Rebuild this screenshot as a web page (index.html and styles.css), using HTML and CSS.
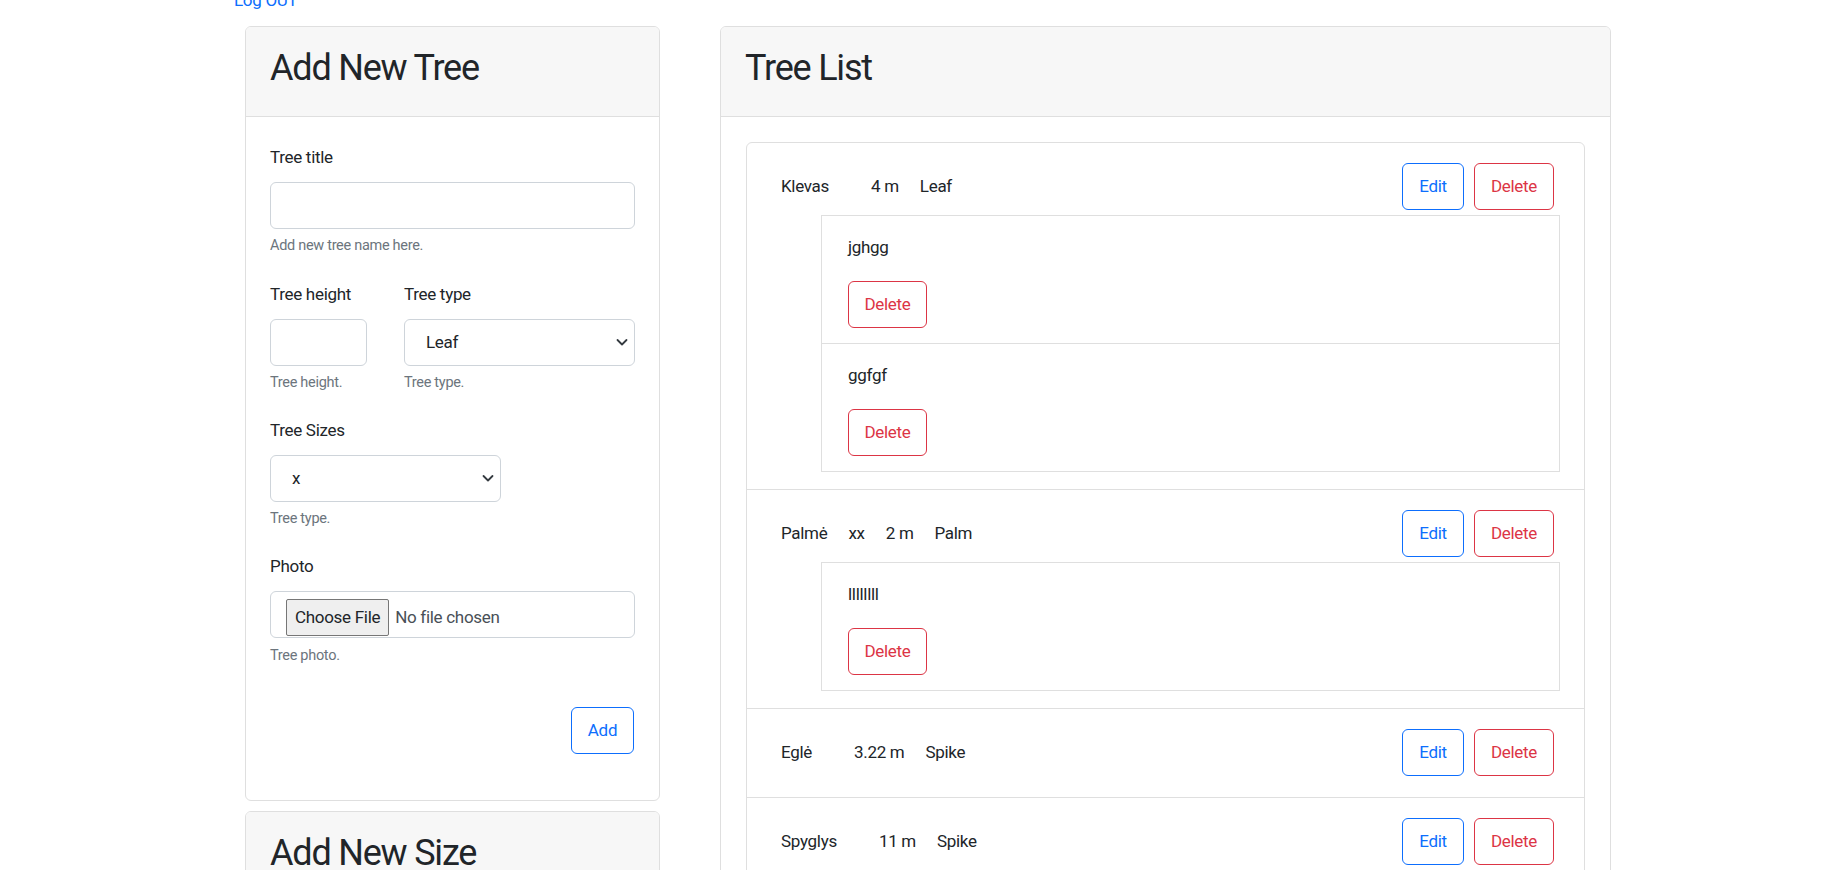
FILE: index.html
```html
<!DOCTYPE html>
<html lang="en">
<head>
<meta charset="utf-8">
<title>Trees</title>
<link rel="stylesheet" href="styles.css">
</head>
<body>
<div class="topbar"><a class="logout" href="#">Log OUT</a></div>
<div class="layout">
  <div class="col-left">
    <div class="card">
      <div class="card-header"><h2 class="card-title">Add New Tree</h2></div>
      <div class="card-body">
        <div class="group group-first">
          <label class="label">Tree title</label>
          <input class="control" type="text">
          <div class="help">Add new tree name here.</div>
        </div>
        <div class="group grid2">
          <div>
            <label class="label">Tree height</label>
            <input class="control" type="text">
            <div class="help">Tree height.</div>
          </div>
          <div>
            <label class="label">Tree type</label>
            <div class="select-wrap">
              <select class="control select"><option>Leaf</option></select>
              <svg class="chev" viewBox="0 0 12 12" width="12" height="12"><path d="M1.5 4l4.5 4.5 4.5-4.5" fill="none" stroke="#343a40" stroke-width="1.8" stroke-linecap="round" stroke-linejoin="round"/></svg>
            </div>
            <div class="help">Tree type.</div>
          </div>
        </div>
        <div class="group grid2">
          <div class="span-first">
            <label class="label">Tree Sizes</label>
            <div class="select-wrap">
              <select class="control select"><option>x</option></select>
              <svg class="chev" viewBox="0 0 12 12" width="12" height="12"><path d="M1.5 4l4.5 4.5 4.5-4.5" fill="none" stroke="#343a40" stroke-width="1.8" stroke-linecap="round" stroke-linejoin="round"/></svg>
            </div>
            <div class="help">Tree type.</div>
          </div>
        </div>
        <div class="group">
          <label class="label">Photo</label>
          <input class="control file" type="file">
          <div class="help help-photo">Tree photo.</div>
        </div>
        <div class="actions">
          <button class="btn btn-blue btn-add">Add</button>
        </div>
      </div>
    </div>
    <div class="card card-second">
      <div class="card-header"><h2 class="card-title">Add New Size</h2></div>
      <div class="card-body">
        <div class="group">
          <label class="label">Size title</label>
          <input class="control" type="text">
        </div>
      </div>
    </div>
  </div>
  <div class="col-right">
    <div class="card">
      <div class="card-header"><h2 class="card-title">Tree List</h2></div>
      <div class="card-body card-body-list">
        <ul class="list">
          <li class="item">
            <div class="row">
              <div class="info"><span>Klevas</span><span></span><span>4 m</span><span>Leaf</span></div>
              <div class="btns"><button class="btn btn-blue btn-edit">Edit</button><button class="btn btn-red btn-del">Delete</button></div>
            </div>
            <ul class="sublist">
              <li class="subitem"><div class="subtext">jghgg</div><button class="btn btn-red btn-del">Delete</button></li>
              <li class="subitem"><div class="subtext">ggfgf</div><button class="btn btn-red btn-del">Delete</button></li>
            </ul>
          </li>
          <li class="item">
            <div class="row">
              <div class="info"><span>Palmė</span><span>xx</span><span>2 m</span><span>Palm</span></div>
              <div class="btns"><button class="btn btn-blue btn-edit">Edit</button><button class="btn btn-red btn-del">Delete</button></div>
            </div>
            <ul class="sublist">
              <li class="subitem"><div class="subtext">llllllll</div><button class="btn btn-red btn-del">Delete</button></li>
            </ul>
          </li>
          <li class="item">
            <div class="row">
              <div class="info"><span>Eglė</span><span></span><span>3.22 m</span><span>Spike</span></div>
              <div class="btns"><button class="btn btn-blue btn-edit">Edit</button><button class="btn btn-red btn-del">Delete</button></div>
            </div>
          </li>
          <li class="item">
            <div class="row">
              <div class="info"><span>Spyglys</span><span></span><span>11 m</span><span>Spike</span></div>
              <div class="btns"><button class="btn btn-blue btn-edit">Edit</button><button class="btn btn-red btn-del">Delete</button></div>
            </div>
          </li>
        </ul>
      </div>
    </div>
  </div>
</div>
</body>
</html>
```

FILE: styles.css
```css
html { overflow: hidden; }
body {
  margin: 0;
  font-family: "Roboto", "Liberation Sans", sans-serif;
  font-size: 17px;
  line-height: 27px;
  letter-spacing: -0.3px;
  color: #212529;
  background: #fff;
}
.topbar {
  padding-left: 234px;
  margin-top: -13px;
  height: 27px;
}
.logout {
  color: #0d6efd;
  text-decoration: none;
}
.layout {
  display: flex;
  gap: 60px;
  padding-left: 245px;
  margin-top: 12px;
  align-items: flex-start;
}
.col-left { width: 415px; flex: none; }
.col-right { width: 891px; flex: none; }
.card {
  border: 1px solid #dfdfdf;
  border-radius: 6px;
  background: #fff;
}
.card-second { margin-top: 10px; }
.card-header {
  background: #f7f7f7;
  border-bottom: 1px solid #dfdfdf;
  border-radius: 5px 5px 0 0;
  padding: 17px 24px 24px;
}
.card-title {
  margin: 0;
  font-size: 36px;
  line-height: 48px;
  font-weight: 400;
  letter-spacing: -1.2px;
}
.card-body {
  padding: 26px 24px 24px;
}
.card-body-list {
  padding: 25px 25px 24px;
}
.group { margin-bottom: 23px; }
.group-first { margin-bottom: 24px; }
.label {
  display: block;
  padding-top: 1px;
  margin-bottom: 11px;
}
.control {
  display: block;
  box-sizing: border-box;
  width: 100%;
  height: 47px;
  border: 1px solid #ced4da;
  border-radius: 6px;
  font: inherit;
  letter-spacing: inherit;
  color: #212529;
  background: #fff;
  margin: 0;
}
.help {
  margin-top: 6px;
  font-size: 14.5px;
  line-height: 21px;
  color: #6c757d;
}
.help-photo { margin-top: 7px; }
.grid2 {
  display: grid;
  grid-template-columns: 97px 1fr;
  column-gap: 37px;
}
.span-first { grid-column: 1 / span 2; width: 231px; }
.select-wrap { position: relative; }
.select {
  appearance: none;
  -webkit-appearance: none;
  padding: 0 32px 0 21px;
}
.chev {
  position: absolute;
  right: 7px;
  top: 17px;
  width: 12px;
  height: 12px;
  pointer-events: none;
}
.file {
  padding: 7px 15px;
  color: #495057;
}
.file::file-selector-button {
  font: inherit;
  letter-spacing: inherit;
  color: #212529;
  height: 37px;
  padding: 0 8px;
  margin-right: 6px;
  border: 1px solid #767676;
  border-radius: 2px;
  background: #efefef;
}
.actions {
  display: flex;
  justify-content: flex-end;
  padding-top: 18px;
  padding-bottom: 22px;
}
.btn {
  box-sizing: border-box;
  height: 47px;
  padding: 0;
  font: inherit;
  letter-spacing: inherit;
  background: #fff;
  border-radius: 6px;
  cursor: pointer;
}
.btn-blue { color: #0d6efd; border: 1px solid #0d6efd; }
.btn-red { color: #dc3545; border: 1px solid #dc3545; }
.btn-add { width: 63px; margin-right: 1px; }
.btn-edit { width: 62px; }
.btn-del { width: 80px; }
.list, .sublist {
  list-style: none;
  margin: 0;
  padding: 0;
}
.list {
  border: 1px solid #dfdfdf;
  border-radius: 6px;
}
.item {
  padding: 20px 24px 21px 34px;
  border-top: 1px solid #dfdfdf;
}
.item:first-child { border-top: none; }
.row {
  display: flex;
  align-items: center;
  justify-content: space-between;
  padding-right: 6px;
  height: 47px;
}
.info span {
  display: inline-block;
  margin-right: 21px;
}
.btns {
  display: flex;
  gap: 10px;
}
.list .sublist {
  margin: 5px 0 -4px 40px;
  border: 1px solid #dfdfdf;
}
.subitem {
  padding: 18px 26px 15px;
  border-top: 1px solid #dfdfdf;
}
.subitem:first-child { border-top: none; }
.subtext { margin-bottom: 20px; }
.subitem .btn-del { width: 79px; display: block; }
```
